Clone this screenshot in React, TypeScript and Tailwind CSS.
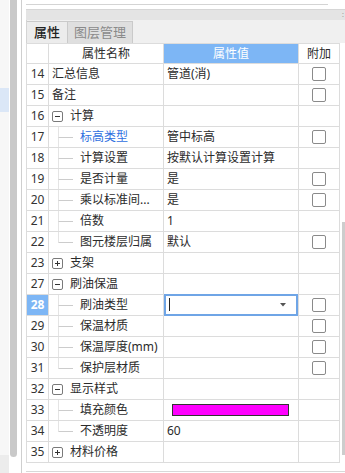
import React from "react";

type Row = {
  n: number;
  kind: "item" | "group" | "child";
  label: string;
  value?: string;
  check?: boolean;
  open?: boolean;
  last?: boolean;
  blue?: boolean;
  extra?: "input" | "color";
};

const rows: Row[] = [
  { n: 14, kind: "item", label: "汇总信息", value: "管道(消)", check: true },
  { n: 15, kind: "item", label: "备注", check: true },
  { n: 16, kind: "group", label: "计算", open: true },
  { n: 17, kind: "child", label: "标高类型", value: "管中标高", check: true, blue: true },
  { n: 18, kind: "child", label: "计算设置", value: "按默认计算设置计算" },
  { n: 19, kind: "child", label: "是否计量", value: "是", check: true },
  { n: 20, kind: "child", label: "乘以标准间...", value: "是", check: true },
  { n: 21, kind: "child", label: "倍数", value: "1" },
  { n: 22, kind: "child", label: "图元楼层归属", value: "默认", check: true, last: true },
  { n: 23, kind: "group", label: "支架", open: false },
  { n: 27, kind: "group", label: "刷油保温", open: true },
  { n: 28, kind: "child", label: "刷油类型", check: true, extra: "input" },
  { n: 29, kind: "child", label: "保温材质", check: true },
  { n: 30, kind: "child", label: "保温厚度(mm)", check: true },
  { n: 31, kind: "child", label: "保护层材质", check: true, last: true },
  { n: 32, kind: "group", label: "显示样式", open: true },
  { n: 33, kind: "child", label: "填充颜色", extra: "color" },
  { n: 34, kind: "child", label: "不透明度", value: "60", last: true },
  { n: 35, kind: "group", label: "材料价格", open: false },
];

function ToggleBox({ open }: { open: boolean }) {
  return (
    <svg width="11" height="11" viewBox="0 0 11 11" className="shrink-0">
      <rect x="0.5" y="0.5" width="10" height="10" rx="1.5" fill="white" stroke="#7a7a7a" />
      <line x1="3" y1="5.5" x2="8" y2="5.5" stroke="#333" />
      {!open && <line x1="5.5" y1="3" x2="5.5" y2="8" stroke="#333" />}
    </svg>
  );
}

function TreeLine({ last }: { last?: boolean }) {
  return (
    <svg width="26" height="21" viewBox="0 0 26 21" className="shrink-0">
      <line x1="9.5" y1="0" x2="9.5" y2={last ? 10.5 : 21} stroke="#e4e4e4" />
      <line x1="9.5" y1="10.5" x2="24" y2="10.5" stroke="#cccccc" />
    </svg>
  );
}

function Check() {
  return <div className="w-[14px] h-[14px] rounded-[2px] border border-[#8a8a8a] bg-white" />;
}

export default function App() {
  return (
    <div
      className="w-[345px] h-[473px] bg-white flex overflow-hidden text-[12px] text-[#2b2b2b]"
      style={{ fontFamily: '"Noto Sans", "Noto Sans CJK SC", sans-serif' }}
    >
      {/* left strip */}
      <div className="w-[9px] flex flex-col bg-[#f7f7f7]">
        <div className="h-[88px]" />
        <div className="h-[24px] bg-[#dbe7f7]" />
        <div className="flex-1" />
        <div className="h-[18px] bg-[#ececec]" />
      </div>
      <div className="w-[9px] flex flex-col">
        <div className="h-[457px] bg-[#c9c9c9] rounded-b-[4px] mx-[1px]" />
      </div>
      <div className="w-[3px]" />
      <div className="w-[1px] bg-[#cfcfcf]" />
      <div className="w-[4px]" />

      {/* panel */}
      <div className="flex-1 flex flex-col">
        <div className="h-[5px] border-b border-[#d4d4d4] mr-[17px]" />
        <div className="h-[4px]" />
        <div className="h-[11px] bg-[#e4e4e4] border-t border-[#d6d6d6] flex justify-end pr-[1px]">
          <span className="text-[7px] leading-[10px] text-[#999]">:</span>
        </div>
        <div className="h-[23px] bg-[#f0f0f0] flex items-end border-l border-[#d4d4d4]">
          <div className="h-[22px] w-[41px] bg-[#ececec] border-t border-r border-[#cacaca] flex items-center justify-center text-[13px] font-medium text-[#222]">
            属性
          </div>
          <div className="h-[22px] w-[65px] bg-[#dfdfdf] border-t border-r border-[#cacaca] flex items-center justify-center text-[13px] text-[#8a8a8a]">
            图层管理
          </div>
        </div>

        <div className="flex-1 flex">
          {/* table */}
          <div className="w-[314px] flex flex-col">
            <div className="flex h-[21px] border-t border-b border-l border-[#dcdcdc] bg-white">
              <div className="w-[22px] border-r border-[#dcdcdc]" />
              <div className="w-[115px] border-r border-[#dcdcdc] flex items-center justify-center">属性名称</div>
              <div className="w-[135px] border-r border-[#dcdcdc] bg-[#7db6f5] text-white flex items-center justify-center">属性值</div>
              <div className="w-[41px] border-r border-[#dcdcdc] flex items-center justify-center">附加</div>
            </div>
            {rows.map((r) => {
              const sel = r.n === 28;
              return (
                <div key={r.n} className="flex h-[21px] border-b border-l border-[#dcdcdc]">
                  <div
                    className={
                      sel
                        ? "w-[22px] border-r border-[#dcdcdc] bg-[#7db6f5] text-white font-bold flex items-center justify-center"
                        : "w-[22px] border-r border-[#dcdcdc] flex items-center justify-center text-[#333]"
                    }
                  >
                    {r.n}
                  </div>
                  <div className="w-[115px] border-r border-[#dcdcdc] flex items-center whitespace-nowrap overflow-hidden">
                    {r.kind === "item" && <span className="pl-[3px]">{r.label}</span>}
                    {r.kind === "group" && (
                      <>
                        <span className="pl-[3px]" />
                        <ToggleBox open={!!r.open} />
                        <span className="pl-[7px]">{r.label}</span>
                      </>
                    )}
                    {r.kind === "child" && (
                      <>
                        <TreeLine last={r.last} />
                        <span className={r.blue ? "pl-[5px] text-[#2f6fe0]" : "pl-[5px]"}>{r.label}</span>
                      </>
                    )}
                  </div>
                  <div className="w-[135px] border-r border-[#dcdcdc] flex items-center whitespace-nowrap">
                    {r.extra === "input" ? (
                      <div className="w-full h-[22px] -mt-[1px] border-2 border-[#6fa5e6] flex items-center justify-between pl-[3px] pr-[10px]">
                        <div className="w-[1px] h-[13px] bg-[#222]" />
                        <svg width="6" height="4" viewBox="0 0 6 4">
                          <path d="M0 0 H6 L3 3.5 Z" fill="#555" />
                        </svg>
                      </div>
                    ) : r.extra === "color" ? (
                      <div className="ml-[8px] w-[117px] h-[12px] bg-[#ff00ff] border border-[#333]" />
                    ) : (
                      <span className="pl-[3px]">{r.value}</span>
                    )}
                  </div>
                  <div className="w-[41px] border-r border-[#dcdcdc] flex items-center justify-center">
                    {r.check && <Check />}
                  </div>
                </div>
              );
            })}
            <div className="flex-1" />
          </div>
          {/* right scrollbar */}
          <div className="flex-1 flex flex-col">
            <div className="h-[179px]" />
            <div className="h-[233px] ml-[2px] bg-[#cdcdcd]" />
          </div>
        </div>
        <div className="h-[2px] border-t border-[#d8d8d8]" />
      </div>
    </div>
  );
}
